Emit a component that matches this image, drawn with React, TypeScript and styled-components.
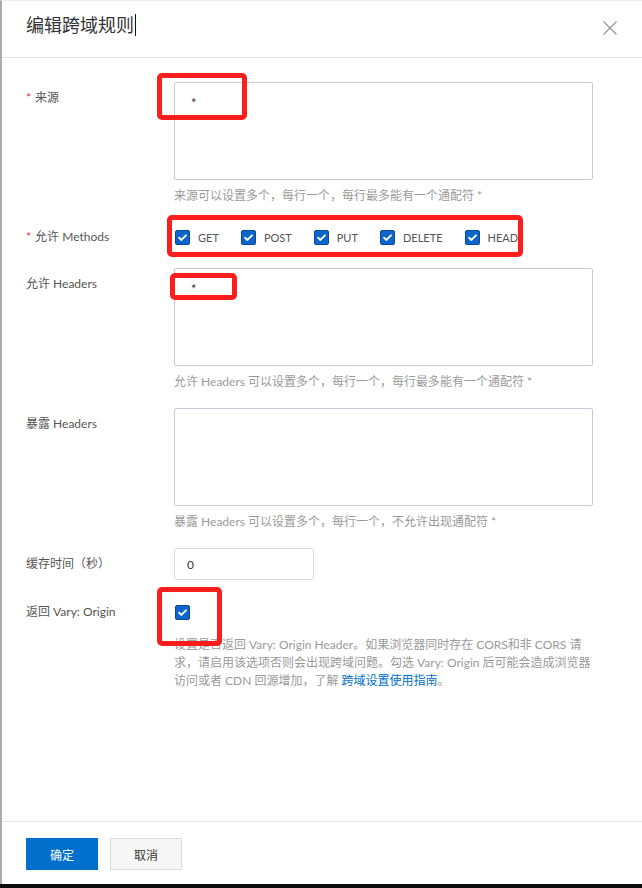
import { FC } from "react"
import styled, { createGlobalStyle } from "styled-components"

const FONT = `Lato, "Noto Sans CJK SC", sans-serif`

const GlobalStyle = createGlobalStyle`
  html, body {
    margin: 0;
    padding: 0;
    background: #fff;
  }
  body {
    font-family: ${FONT};
    color: #333;
  }
  * {
    box-sizing: border-box;
  }
`

// #region styled
const Page = styled.div`
  position: relative;
  width: 642px;
  height: 888px;
  display: flex;
  flex-direction: column;
  overflow: hidden;
`

const Dialog = styled.div`
  flex: 1;
  display: flex;
  flex-direction: column;
  background: #fff;
  border-left: 2px solid #ababab;
  border-top: 1px solid #ececec;
`

const Header = styled.header`
  height: 57px;
  display: flex;
  align-items: flex-start;
  justify-content: space-between;
  padding: 12px 20px 0 24px;
  border-bottom: 1px solid #e5e5e5;
`

const Title = styled.h2`
  margin: 0;
  display: flex;
  align-items: center;
  font-size: 18px;
  line-height: 24px;
  font-weight: 400;
  color: #333;
`

const Caret = styled.span`
  display: inline-block;
  width: 1px;
  height: 22px;
  margin-left: 1px;
  background: #111;
`

const CloseButton = styled.button`
  width: 24px;
  height: 24px;
  margin-top: 3px;
  padding: 0;
  border: none;
  background: none;
  display: flex;
  align-items: center;
  justify-content: center;
  color: #9a9a9a;
`

const Body = styled.div`
  flex: 1;
  padding: 24px 24px 0;
`

const FormItem = styled.div`
  display: grid;
  grid-template-columns: 148px 419px;
  margin-bottom: 16px;
`

const Label = styled.div<{ $lh?: number }>`
  font-size: 12px;
  line-height: ${p => p.$lh ?? 32}px;
  color: #555;
  white-space: nowrap;
`

const Required = styled.span`
  color: #e0372c;
  margin-right: 4px;
`

const Control = styled.div``

const TextArea = styled.textarea`
  display: block;
  width: 419px;
  height: 98px;
  margin: 0;
  padding: 11px 16px;
  border: 1px solid #c6cad0;
  border-radius: 2px;
  resize: none;
  outline: none;
  font-family: ${FONT};
  font-size: 13px;
  line-height: 18px;
  color: #333;
  background: #fff;
`

const Input = styled.input`
  display: block;
  width: 140px;
  height: 32px;
  margin: 0;
  padding: 0 12px;
  border: 1px solid #dcdcdc;
  border-radius: 2px;
  outline: none;
  font-family: ${FONT};
  font-size: 12px;
  color: #333;
`

const Help = styled.div<{ $lh?: number; $mt?: number }>`
  margin-top: ${p => p.$mt ?? 6}px;
  font-size: 12px;
  line-height: ${p => p.$lh ?? 20}px;
  color: #9a9a9a;
`

const HelpLink = styled.a`
  color: #0070cc;
  text-decoration: none;
`

const CheckRow = styled.div<{ $h?: number }>`
  height: ${p => p.$h ?? 32}px;
  display: flex;
  align-items: center;
`

const CheckItem = styled.label`
  display: flex;
  align-items: center;
  margin-right: 21px;
  font-size: 11px;
  color: #555;
`

const Box = styled.span`
  width: 15px;
  height: 15px;
  margin-left: 1px;
  border: 1px solid #0a4a95;
  border-radius: 2px;
  background: #0e66cc;
  display: flex;
  align-items: center;
  justify-content: center;
`

const CheckText = styled.span`
  margin-left: 8px;
`

const Footer = styled.footer`
  display: flex;
  padding: 16px 24px 14px;
  border-top: 1px solid #e5e5e5;
`

const Button = styled.button<{ $primary?: boolean }>`
  width: 72px;
  height: 32px;
  margin-right: 12px;
  padding: 0;
  font-family: ${FONT};
  font-size: 12px;
  border: 1px solid ${p => (p.$primary ? "#0070cc" : "#dcdcdc")};
  background: ${p => (p.$primary ? "#0070cc" : "#f7f7f7")};
  color: ${p => (p.$primary ? "#fff" : "#333")};
`

const BottomEdge = styled.div`
  height: 4px;
  background: #0b0b0b;
`

const Mark = styled.div`
  position: absolute;
  border: 5px solid #fb1e1a;
  border-radius: 5px;
  pointer-events: none;
`
// #endregion

const methods = ["GET", "POST", "PUT", "DELETE", "HEAD"]

const marks = [
  { left: 157, top: 73, width: 90, height: 47 },
  { left: 167, top: 215, width: 356, height: 42 },
  { left: 170, top: 273, width: 67, height: 27 },
  { left: 157, top: 587, width: 65, height: 59 },
]

const Check: FC = () => (
  <Box>
    <svg width="11" height="11" viewBox="0 0 12 12">
      <path d="M2.2 6.2l2.6 2.5L9.8 3.6" fill="none" stroke="#fff" strokeWidth="2" strokeLinecap="round" strokeLinejoin="round" />
    </svg>
  </Box>
)

const App: FC = () => (
  <Page>
    <GlobalStyle />
    <Dialog>
      <Header>
        <Title>
          编辑跨域规则
          <Caret />
        </Title>
        <CloseButton aria-label="关闭">
          <svg width="16" height="16" viewBox="0 0 16 16">
            <path d="M1.5 1.5l13 13M14.5 1.5l-13 13" stroke="currentColor" strokeWidth="1.4" />
          </svg>
        </CloseButton>
      </Header>

      <Body>
        <FormItem>
          <Label><Required>*</Required>来源</Label>
          <Control>
            <TextArea readOnly defaultValue="*" />
            <Help>来源可以设置多个，每行一个，每行最多能有一个通配符 *</Help>
          </Control>
        </FormItem>

        <FormItem>
          <Label $lh={30}><Required>*</Required>允许 Methods</Label>
          <CheckRow $h={30}>
            {methods.map(m => (
              <CheckItem key={m}>
                <Check />
                <CheckText>{m}</CheckText>
              </CheckItem>
            ))}
          </CheckRow>
        </FormItem>

        <FormItem>
          <Label>允许 Headers</Label>
          <Control>
            <TextArea readOnly defaultValue="*" />
            <Help>允许 Headers 可以设置多个，每行一个，每行最多能有一个通配符 *</Help>
          </Control>
        </FormItem>

        <FormItem>
          <Label>暴露 Headers</Label>
          <Control>
            <TextArea readOnly defaultValue="" />
            <Help>暴露 Headers 可以设置多个，每行一个，不允许出现通配符 *</Help>
          </Control>
        </FormItem>

        <FormItem>
          <Label>缓存时间（秒）</Label>
          <Input readOnly defaultValue="0" />
        </FormItem>

        <FormItem>
          <Label>返回 Vary: Origin</Label>
          <Control>
            <CheckRow>
              <Check />
            </CheckRow>
            <Help $lh={18} $mt={8}>
              设置是否返回 Vary: Origin Header。如果浏览器同时存在 CORS和非 CORS 请求，请启用该选项否则会出现跨域问题。勾选 Vary: Origin 后可能会造成浏览器访问或者 CDN 回源增加，了解 <HelpLink href="#">跨域设置使用指南</HelpLink>。
            </Help>
          </Control>
        </FormItem>
      </Body>

      <Footer>
        <Button $primary>确定</Button>
        <Button>取消</Button>
      </Footer>
    </Dialog>
    <BottomEdge />

    {marks.map((m, i) => (
      <Mark key={i} style={{ left: m.left, top: m.top, width: m.width, height: m.height }} />
    ))}
  </Page>
)

export default App
